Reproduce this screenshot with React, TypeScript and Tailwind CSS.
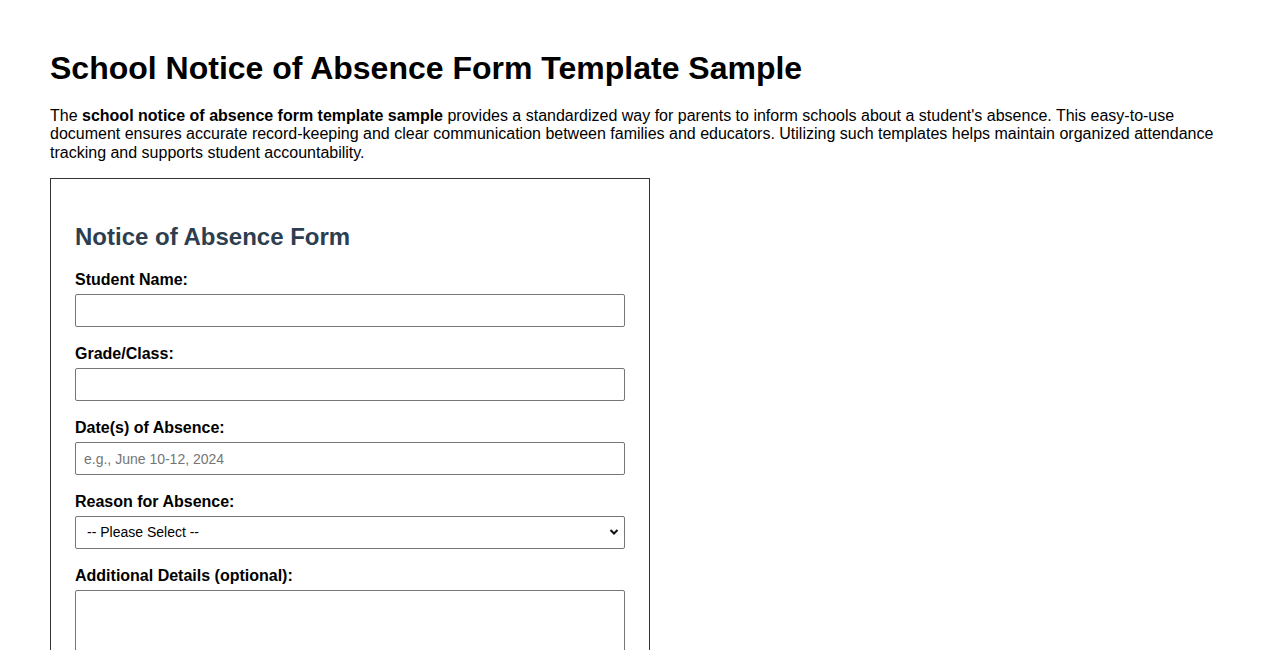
export default function App() {
  return (
    <div className="min-h-screen bg-white px-[50px] pt-[50px] text-black font-['Liberation_Sans',Arial,sans-serif]">
      <h1 className="text-[32px] leading-[37px] font-bold">School Notice of Absence Form Template Sample</h1>

      <p className="mt-[20px] text-[16px] leading-[18.4px]">
        The <strong>school notice of absence form template sample</strong> provides a standardized way for parents to
        inform schools about a student's absence. This easy-to-use document ensures accurate record-keeping and clear
        communication between families and educators. Utilizing such templates helps maintain organized attendance
        tracking and supports student accountability.
      </p>

      <div className="mt-[16px] w-[600px] border border-[#333] px-[24px] pt-[24px] pb-[24px]">
        <h2 className="mt-[20px] mb-[21px] text-[24px] leading-[27px] font-bold text-[#2c3e50]">Notice of Absence Form</h2>

        <form>
          <label className="block mb-[5px] text-[16px] leading-[18px] font-bold">Student Name:</label>
          <input
            type="text"
            className="block w-[550px] h-[33px] mb-[18px] px-[8px] text-[14px] border border-[#767676] rounded-[2px]"
          />

          <label className="block mb-[5px] text-[16px] leading-[18px] font-bold">Grade/Class:</label>
          <input
            type="text"
            className="block w-[550px] h-[33px] mb-[18px] px-[8px] text-[14px] border border-[#767676] rounded-[2px]"
          />

          <label className="block mb-[5px] text-[16px] leading-[18px] font-bold">Date(s) of Absence:</label>
          <input
            type="text"
            placeholder="e.g., June 10-12, 2024"
            className="block w-[550px] h-[33px] mb-[18px] px-[8px] text-[14px] border border-[#767676] rounded-[2px] placeholder:text-[#757575]"
          />

          <label className="block mb-[5px] text-[16px] leading-[18px] font-bold">Reason for Absence:</label>
          <div className="relative w-[550px] h-[33px] mb-[18px]">
            <select className="block w-full h-full appearance-none pl-[11px] pr-[24px] text-[14px] bg-white border border-[#767676] rounded-[2px]">
              <option>-- Please Select --</option>
              <option>Illness</option>
              <option>Medical Appointment</option>
              <option>Family Emergency</option>
              <option>Other</option>
            </select>
            <svg
              className="pointer-events-none absolute right-[6px] top-[12px]"
              width="10"
              height="8"
              viewBox="0 0 10 8"
              fill="none"
            >
              <path d="M1.5 2 L5 5.5 L8.5 2" stroke="#111" strokeWidth="2" />
            </svg>
          </div>

          <label className="block mb-[5px] text-[16px] leading-[18px] font-bold">Additional Details (optional):</label>
          <textarea className="block w-[550px] h-[80px] px-[8px] py-[6px] text-[14px] border border-[#767676] rounded-[2px]" />
        </form>
      </div>
    </div>
  );
}
